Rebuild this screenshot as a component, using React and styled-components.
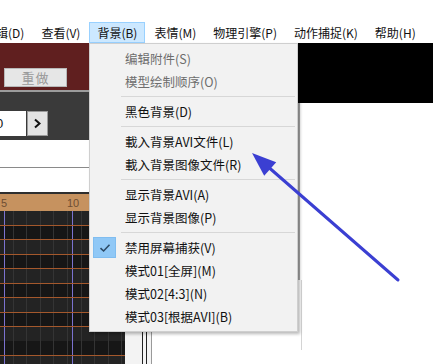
import React from "react";
import styled, { createGlobalStyle } from "styled-components";

const Global = createGlobalStyle`
  html, body { margin: 0; padding: 0; background: #fff; }
  body { font-family: "Noto Sans CJK SC", "Noto Sans", sans-serif; }
`;

const Screen = styled.div`
  position: relative;
  width: 433px;
  height: 364px;
  overflow: hidden;
  background: #fff;
  display: flex;
  flex-direction: column;
  font-family: "Noto Sans CJK SC", "Noto Sans", sans-serif;
  font-size: 12px;
  color: #111;
`;

const TopStrip = styled.div`
  height: 22px;
  flex: none;
`;

const MenuBar = styled.div`
  height: 21px;
  flex: none;
  display: flex;
  align-items: stretch;
  margin-left: -24px;
`;

const MenuTitle = styled.div`
  display: flex;
  align-items: center;
  padding: 0 7px;
  box-sizing: border-box;
  border: 1px solid ${(p) => (p.$open ? "#99d1ff" : "transparent")};
  background: ${(p) => (p.$open ? "#cce8ff" : "transparent")};
  white-space: nowrap;
  margin-right: 1px;
`;

const Workspace = styled.div`
  flex: 1;
  display: flex;
  min-height: 0;
`;

const LeftPanel = styled.div`
  width: 142px;
  flex: none;
  display: flex;
  flex-direction: column;
`;

const UndoBar = styled.div`
  height: 49px;
  background: #601f1f;
  padding: 25px 0 0 4px;
  box-sizing: border-box;
  border-bottom: 2px solid #9c9c9c;
  flex: none;
`;

const RedoButton = styled.div`
  width: 63px;
  height: 19px;
  box-sizing: border-box;
  background: #e6e6e6;
  border: 1px solid #b8b8b8;
  color: #9a9a9a;
  font-size: 13px;
  display: flex;
  align-items: center;
  justify-content: center;
  letter-spacing: 1px;
`;

const FrameBar = styled.div`
  height: 48px;
  flex: none;
  background: #3a3a3a;
  display: flex;
  align-items: flex-start;
  gap: 1px;
  padding-top: 19px;
  box-sizing: border-box;
`;

const FrameInput = styled.div`
  width: 26px;
  height: 25px;
  background: #fff;
  overflow: hidden;
  display: flex;
  align-items: center;
  font-family: "Liberation Sans", sans-serif;
  font-size: 13px;
  color: #111;
  span { margin-left: -4px; }
`;

const StepButton = styled.div`
  width: 21px;
  height: 25px;
  box-sizing: border-box;
  background: #e3e3e3;
  border: 1px solid #9a9a9a;
  display: flex;
  align-items: center;
  justify-content: center;
`;

const TrackRow = styled.div`
  height: ${(p) => p.$h}px;
  flex: none;
  background: #fff;
  border-bottom: ${(p) => p.$line};
`;

const Ruler = styled.div`
  height: 17px;
  flex: none;
  background: #c6925f;
  position: relative;
  font-family: "Liberation Sans", sans-serif;
  font-size: 11px;
  color: #6e4e33;
  display: flex;
  align-items: center;
`;

const RulerMark = styled.span`
  position: absolute;
  left: ${(p) => p.$x}px;
`;

const TimelineRow = styled.div`
  flex: 1;
  display: flex;
  min-height: 0;
`;

const Grid = styled.div`
  width: 125px;
  flex: none;
  background-color: #1b1b1b;
  background-image:
    repeating-linear-gradient(to bottom, transparent 0 13.5px, #a4582c 13.5px 14.5px),
    repeating-linear-gradient(to right, transparent 0 4px, #7b72cf 4px 5px, transparent 5px 68px),
    repeating-linear-gradient(to right, transparent 0 12.6px, #343434 12.6px 13.6px),
    repeating-linear-gradient(to bottom, #232323 0 14.5px, #161616 14.5px 29px);
`;

const VScroll = styled.div`
  flex: 1;
  background: #f3f3f3;
`;

const Splitter = styled.div`
  width: 11px;
  flex: none;
  background: linear-gradient(
    to right,
    #222 0 1px, #f4f4f4 1px 4px, #222 4px 5px, #f4f4f4 5px 9px, #9a9a9a 9px 10px, #fff 10px
  );
`;

const RightArea = styled.div`
  flex: 1;
  display: flex;
  background: #fff;
`;

const BlankSide = styled.div`
  width: 145px;
  flex: none;
`;

const ViewPane = styled.div`
  flex: 1;
  display: flex;
  flex-direction: column;
`;

const BlackStrip = styled.div`
  height: 60px;
  flex: none;
  background: #000;
`;

const ViewEdge = styled.div`
  height: ${(p) => p.$h}px;
  flex: none;
  margin-left: ${(p) => p.$x}px;
  border-left: ${(p) => p.$w}px solid ${(p) => p.$c};
`;

const DropMenu = styled.div`
  position: absolute;
  left: 89px;
  top: 43px;
  width: 209px;
  box-sizing: border-box;
  padding: 3px 2px 3px 2px;
  background: #f2f2f2;
  border: 1px solid #cfcfcf;
  box-shadow: 2px 2px 3px rgba(0, 0, 0, 0.28);
  font-size: 12.5px;
`;

const MenuItem = styled.div`
  position: relative;
  height: 23px;
  display: flex;
  align-items: center;
  padding-left: 33px;
  color: ${(p) => (p.$disabled ? "#6d6d6d" : "#111")};
  white-space: nowrap;
`;

const CheckBox = styled.div`
  position: absolute;
  left: 1px;
  top: 1px;
  width: 23px;
  height: 21px;
  background: #90c8f6;
  border: 1px solid #80bdf0;
  box-sizing: border-box;
  display: flex;
  align-items: center;
  justify-content: center;
`;

const Separator = styled.div`
  height: 7px;
  display: flex;
  align-items: center;
  padding-left: 29px;
  &::after {
    content: "";
    flex: 1;
    height: 1px;
    background: #d7d7d7;
  }
`;

const ArrowLayer = styled.svg`
  position: absolute;
  left: 0;
  top: 0;
  pointer-events: none;
`;

const menuTitles = ["编辑(D)", "查看(V)", "背景(B)", "表情(M)", "物理引擎(P)", "动作捕捉(K)", "帮助(H)"];

const items = [
  { t: "编辑附件(S)", d: true },
  { t: "模型绘制顺序(O)", d: true },
  { sep: true },
  { t: "黑色背景(D)" },
  { sep: true },
  { t: "載入背景AVI文件(L)" },
  { t: "載入背景图像文件(R)" },
  { sep: true },
  { t: "显示背景AVI(A)" },
  { t: "显示背景图像(P)" },
  { sep: true },
  { t: "禁用屏幕捕获(V)", c: true },
  { t: "模式01[全屏](M)" },
  { t: "模式02[4:3](N)" },
  { t: "模式03[根据AVI](B)" },
];

export default function App() {
  return (
    <>
      <Global />
      <Screen>
        <TopStrip />
        <MenuBar>
          {menuTitles.map((m) => (
            <MenuTitle key={m} $open={m === "背景(B)"}>
              {m}
            </MenuTitle>
          ))}
        </MenuBar>
        <Workspace>
          <LeftPanel>
            <UndoBar>
              <RedoButton>重做</RedoButton>
            </UndoBar>
            <FrameBar>
              <FrameInput>
                <span>0</span>
              </FrameInput>
              <StepButton>
                <svg width="9" height="11" viewBox="0 0 9 11">
                  <path d="M2 1.5 L6.5 5.5 L2 9.5" fill="none" stroke="#111" strokeWidth="2" />
                </svg>
              </StepButton>
            </FrameBar>
            <TrackRow $h={27} $line="1px solid #8a8a8a" />
            <TrackRow $h={24} $line="2px solid #2e2e2e" />
            <Ruler>
              <RulerMark $x={1}>5</RulerMark>
              <RulerMark $x={67}>10</RulerMark>
            </Ruler>
            <TimelineRow>
              <Grid />
              <VScroll />
            </TimelineRow>
          </LeftPanel>
          <Splitter />
          <RightArea>
            <BlankSide />
            <ViewPane>
              <BlackStrip />
              <ViewEdge $h={177} $x={0} $w={2} $c="#a9a9a9" />
              <ViewEdge $h={70} $x={3} $w={1} $c="#d4d4d4" />
            </ViewPane>
          </RightArea>
        </Workspace>
        <DropMenu>
          {items.map((it, i) =>
            it.sep ? (
              <Separator key={i} />
            ) : (
              <MenuItem key={i} $disabled={it.d}>
                {it.c && (
                  <CheckBox>
                    <svg width="12" height="10" viewBox="0 0 12 10">
                      <path d="M1.5 5.2 L4.6 8 L10.5 1.8" fill="none" stroke="#2c4a66" strokeWidth="1.6" />
                    </svg>
                  </CheckBox>
                )}
                {it.t}
              </MenuItem>
            )
          )}
        </DropMenu>
        <ArrowLayer width="433" height="364" viewBox="0 0 433 364">
          <line x1="398" y1="280" x2="266" y2="165" stroke="#3b3fd2" strokeWidth="3" strokeLinecap="round" />
          <polygon points="252,153 264.2,175.8 276.2,162.2" fill="#3b3fd2" />
        </ArrowLayer>
      </Screen>
    </>
  );
}
